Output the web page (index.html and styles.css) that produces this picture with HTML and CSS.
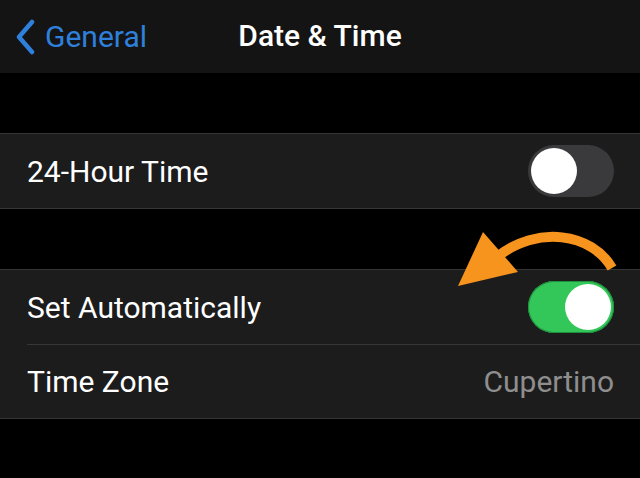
FILE: index.html
```html
<!DOCTYPE html>
<html lang="en">
<head>
    <meta charset="UTF-8">
    <meta name="viewport" content="width=device-width, initial-scale=1.0">
    <title>Date &amp; Time</title>
    <link rel="stylesheet" href="styles.css">
</head>
<body>
<div class="screen">
    <div class="navbar">
        <a class="back" href="#">
            <svg class="chevron" width="20" height="36" viewBox="0 0 20 36">
                <path d="M17 3 L4 18 L17 33" fill="none" stroke="#2f80dc" stroke-width="4.5" stroke-linecap="round" stroke-linejoin="round"/>
            </svg>
            <span>General</span>
        </a>
        <h1>Date &amp; Time</h1>
        <div></div>
    </div>

    <div class="spacer"></div>
    <div class="group">
        <div class="row">
            <span class="label">24-Hour Time</span>
            <div class="switch"><div class="knob"></div></div>
        </div>
    </div>

    <div class="spacer"></div>
    <div class="group">
        <div class="row">
            <span class="label">Set Automatically</span>
            <div class="switch on"><div class="knob"></div></div>
        </div>
        <div class="row">
            <span class="label">Time Zone</span>
            <span class="value">Cupertino</span>
        </div>
    </div>

    <!-- the orange hint arrow drawn over the list -->
    <svg class="hint-arrow" width="185" height="80" viewBox="0 0 185 80">
        <path d="M175 49 C 155 14, 100 6, 60 38" fill="none" stroke="#f7941d" stroke-width="10"/>
        <polygon points="21,67 46,13 81,53" fill="#f7941d"/>
    </svg>
</div>
</body>
</html>
```

FILE: styles.css
```css
body {
    margin: 0;
    background: #000;
    font-family: Roboto, "Liberation Sans", sans-serif;
    color: #fff;
}
.screen {
    position: relative;
    width: 640px;
    height: 478px;
    overflow: hidden;
}
.navbar {
    height: 73px;
    background: #141414;
    display: grid;
    grid-template-columns: 1fr auto 1fr;
    align-items: center;
}
.back {
    display: flex;
    align-items: center;
    gap: 10px;
    padding-left: 15px;
    color: #2f80dc;
    text-decoration: none;
    font-size: 30px;
}
.back span {
    margin-top: -1px;
}
.navbar h1 {
    margin: 0;
    font-size: 30px;
    font-weight: 500;
    margin-top: -2px;
}
.spacer {
    height: 60px;
}
.group {
    background: #1c1c1c;
    border-top: 1px solid #363636;
    border-bottom: 1px solid #363636;
}
.row {
    height: 74px;
    display: flex;
    align-items: center;
    justify-content: space-between;
    padding: 0 26px 0 27px;
    position: relative;
}
.row + .row::before {
    content: "";
    position: absolute;
    top: 0;
    left: 27px;
    right: 0;
    border-top: 1px solid #363636;
}
.label {
    font-size: 30px;
}
.value {
    font-size: 30px;
    color: #8e8e8e;
}
.switch {
    width: 86px;
    height: 52px;
    border-radius: 26px;
    background: #3a3a3c;
    display: flex;
    align-items: center;
    padding: 0 3px;
    box-sizing: border-box;
}
.knob {
    width: 46px;
    height: 46px;
    border-radius: 50%;
    background: #fff;
}
.switch.on {
    background: #33c759;
    justify-content: flex-end;
    box-shadow: inset 0 0 0 1px #1f8f3c;
}
.hint-arrow {
    position: absolute;
    left: 437px;
    top: 219px;
}
```
